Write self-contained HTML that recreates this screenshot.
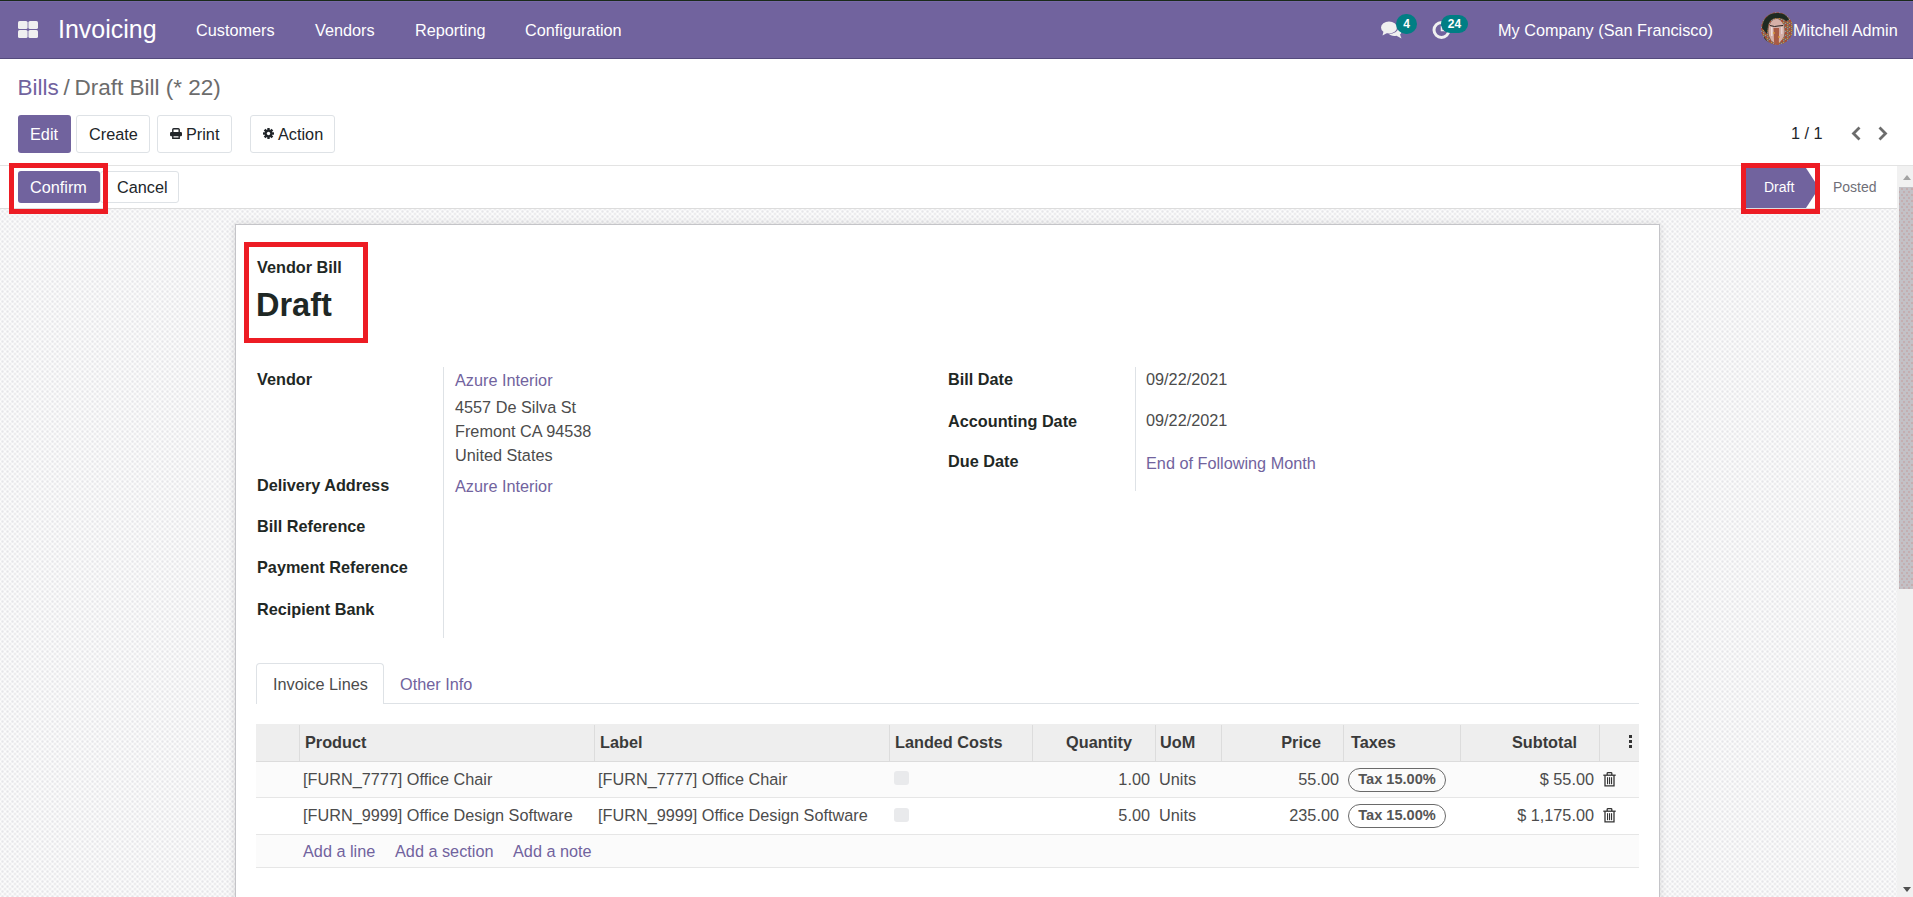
<!DOCTYPE html>
<html><head><meta charset="utf-8">
<style>
*{box-sizing:border-box;margin:0;padding:0}
html,body{width:1913px;height:897px;overflow:hidden;background:#fff}
body{font-family:"Liberation Sans",sans-serif;font-size:16.25px;color:#4c4c4c;position:relative}
.a{position:absolute;white-space:nowrap;line-height:1}
.nav{position:absolute;left:0;top:0;width:1913px;height:59px;background:#71639e;border-top:1px solid #1a2a1a;border-bottom:1px solid #544a7d;box-shadow:inset 0 1px 0 #7869a8}
.nav .a{color:#fff}
.btn{position:absolute;border:1px solid #dee2e6;border-radius:3px;background:#fff}
.btnp{position:absolute;border-radius:3px;background:#71639e}
.red{position:absolute;border:5px solid #ed1c24}
.lbl{font-weight:bold;color:#1f2825}
.lnk{color:#71639e}
.bg{position:absolute;left:0;top:209px;width:1897px;height:688px;
 background:radial-gradient(circle at 2.5px 2.5px,#e6e6e9 0,#e9e9ec 0.8px,rgba(255,255,255,0) 1.8px) 0 0/5px 5px,radial-gradient(circle at 2.5px 2.5px,#e6e6e9 0,#e9e9ec 0.8px,rgba(255,255,255,0) 1.8px) 2.5px 2.5px/5px 5px,#fcfcfc}
.sheet{position:absolute;left:235px;top:224px;width:1425px;height:700px;background:#fff;border:1px solid #c4c4c8;box-shadow:0 0 8px rgba(0,0,0,.12)}
.th{font-weight:bold;color:#3a3a3a}
.vsep{position:absolute;width:1px;background:#dee2e6}
</style></head><body>

<!-- NAVBAR -->
<div class="nav">
  <svg class="a" style="left:18px;top:20px" width="20" height="17" viewBox="0 0 20 17">
    <rect x="0" y="0" width="9.6" height="8.1" rx="1.6" fill="#f0f0f0"/>
    <rect x="10.4" y="0" width="9.6" height="8.1" rx="1.6" fill="#f0f0f0"/>
    <rect x="0" y="8.9" width="9.6" height="8.1" rx="1.6" fill="#f0f0f0"/>
    <rect x="10.4" y="8.9" width="9.6" height="8.1" rx="1.6" fill="#f0f0f0"/>
  </svg>
  <div class="a" style="left:58px;top:16px;font-size:25px">Invoicing</div>
  <div class="a" style="left:196px;top:21px">Customers</div>
  <div class="a" style="left:315px;top:21px">Vendors</div>
  <div class="a" style="left:415px;top:21px">Reporting</div>
  <div class="a" style="left:525px;top:21px">Configuration</div>

  <!-- chat icon -->
  <svg class="a" style="left:1381px;top:20px" width="22" height="19" viewBox="0 0 22 19">
    <ellipse cx="8" cy="6.5" rx="8" ry="6" fill="#f0f0f0"/>
    <path d="M2.5 10.5 L1.5 14.5 L7 11.5 Z" fill="#f0f0f0"/>
    <path d="M17.5 6.5 C21 8 21.5 11.5 19 13.5 L20.5 17.5 L15.5 14.8 C12 15.5 9 14.5 8 12.8 C13 12.8 17 10.5 17.5 6.5 Z" fill="#f0f0f0"/>
  </svg>
  <div class="a" style="left:1396px;top:13px;width:21px;height:20px;border-radius:10px;background:#017e84;color:#fff;font-size:12px;font-weight:bold;text-align:center;line-height:20px">4</div>
  <!-- clock icon -->
  <svg class="a" style="left:1432px;top:19px" width="20" height="20" viewBox="0 0 20 20">
    <circle cx="9.5" cy="10" r="7.5" fill="none" stroke="#f0f0f0" stroke-width="3"/>
    <path d="M9.5 6 V10.5 H13" fill="none" stroke="#f0f0f0" stroke-width="1.5"/>
  </svg>
  <div class="a" style="left:1441px;top:14px;width:27px;height:18px;border-radius:9px;background:#017e84;color:#fff;font-size:12px;font-weight:bold;text-align:center;line-height:18px">24</div>

  <div class="a" style="left:1498px;top:21px">My Company (San Francisco)</div>
  <svg class="a" style="left:1761px;top:11px" width="32" height="33" viewBox="0 0 32 33">
  <defs><clipPath id="av"><ellipse cx="16" cy="16.5" rx="16" ry="16.3"/></clipPath>
  <pattern id="spk" width="4" height="4" patternUnits="userSpaceOnUse"><rect width="4" height="4" fill="#8a6452"/><rect x="0" y="0" width="2" height="2" fill="#a84c34"/><rect x="2" y="2" width="1" height="1" fill="#d29434"/><rect x="2" y="0" width="1.2" height="1.2" fill="#8e8e8c"/><rect x="0" y="3" width="1" height="1" fill="#9a9894"/></pattern></defs>
  <g clip-path="url(#av)">
    <rect width="32" height="33" fill="url(#spk)"/>
    <path d="M1 16 C2 5 9 1 16 1 C22 1 26 3 28 8 L25 9 C23 7 20 6 16 6 C11 6 8 9 7 14 L6 22 Z" fill="#1e2a22"/>
    <path d="M3 24 C5 28 7 31 10 33 L4 33 Z" fill="#1e2a22"/>
    <ellipse cx="15.5" cy="19" rx="8" ry="12" fill="#d6b0a8"/>
    <path d="M9 13.5 L13.5 14.5 L17 14 L22 13.5" stroke="#2a2424" stroke-width="1" fill="none"/>
    <path d="M12.5 16 C13 22 12.5 27 13.5 33 L18 33 C17.5 27 18.5 21 18 16 Z" fill="#a85a44"/>
    <rect x="10" y="15" width="1.5" height="9" fill="#eadcdc"/>
    <rect x="20" y="15" width="1.5" height="7" fill="#e6d2d0"/>
    <circle cx="13" cy="21" r="0.9" fill="#d89a36"/><circle cx="18" cy="25" r="0.9" fill="#d89a36"/>
  </g>
</svg>
  <div class="a" style="left:1793px;top:21px">Mitchell Admin</div>
</div>

<!-- BACKGROUND + SHEET -->
<div class="bg"></div>
<div class="sheet"></div>

<!-- CONTROL PANEL -->
<div class="a" style="left:17.5px;top:77px;font-size:22.5px;color:#71639e">Bills</div>
<div class="a" style="left:63.5px;top:77px;font-size:22.5px;color:#6c6c6c">/</div>
<div class="a" style="left:74.5px;top:77px;font-size:22.5px;color:#6c6c6c">Draft Bill (* 22)</div>

<div class="btnp" style="left:18px;top:115px;width:53px;height:38px"></div>
<div class="a" style="left:30px;top:126px;color:#fff">Edit</div>
<div class="btn" style="left:76px;top:115px;width:74px;height:38px"></div>
<div class="a" style="left:89px;top:126px;color:#212529">Create</div>
<div class="btn" style="left:157px;top:115px;width:75px;height:38px"></div>
<svg class="a" style="left:170px;top:128px" width="12" height="11" viewBox="0 0 12 11">
  <path d="M2.8 4 V1.6 Q2.8 0.7 3.7 0.7 H8.3 Q9.2 0.7 9.2 1.6 V4" fill="none" stroke="#212529" stroke-width="1.4"/>
  <rect x="0" y="4" width="12" height="4.2" rx="1.2" fill="#212529"/>
  <path d="M2.8 7.5 V10.3 H9.2 V7.5" fill="none" stroke="#212529" stroke-width="1.4"/>
</svg>
<div class="a" style="left:186px;top:126px;color:#212529">Print</div>
<div class="btn" style="left:250px;top:115px;width:85px;height:38px"></div>
<svg class="a" style="left:263px;top:128px" width="11" height="11" viewBox="-6.5 -6.5 13 13">
  <g fill="#212529">
    <circle r="4.6"/>
    <rect x="-1.4" y="-6.5" width="2.8" height="13"/>
    <rect x="-1.4" y="-6.5" width="2.8" height="13" transform="rotate(45)"/>
    <rect x="-1.4" y="-6.5" width="2.8" height="13" transform="rotate(90)"/>
    <rect x="-1.4" y="-6.5" width="2.8" height="13" transform="rotate(135)"/>
  </g>
  <circle r="2" fill="#fff"/>
</svg>
<div class="a" style="left:278px;top:126px;color:#212529">Action</div>

<div class="a" style="left:1791px;top:125px;color:#212529">1 / 1</div>
<svg class="a" style="left:1850px;top:126px" width="12" height="15" viewBox="0 0 12 15">
  <path d="M9.5 1.5 L3.5 7.5 L9.5 13.5" fill="none" stroke="#6c6c6c" stroke-width="2.8"/>
</svg>
<svg class="a" style="left:1877px;top:126px" width="12" height="15" viewBox="0 0 12 15">
  <path d="M2.5 1.5 L8.5 7.5 L2.5 13.5" fill="none" stroke="#6c6c6c" stroke-width="2.8"/>
</svg>

<!-- STATUS BAR -->
<div class="a" style="left:0;top:165px;width:1913px;height:1px;background:#e3e3e3"></div>
<div class="a" style="left:0;top:208px;width:1897px;height:1px;background:#dcdcdc"></div>
<div class="btnp" style="left:18px;top:171px;width:82px;height:32px"></div>
<div class="a" style="left:30px;top:179px;color:#fff">Confirm</div>
<div class="btn" style="left:100px;top:171px;width:79px;height:32px"></div>
<div class="a" style="left:117px;top:179px;color:#212529">Cancel</div>
<div class="red" style="left:9px;top:163px;width:99px;height:51px"></div>

<svg class="a" style="left:1745px;top:168px" width="75" height="40" viewBox="0 0 75 40">
  <path d="M0 0 H61 L74 20 L61 40 H0 Z" fill="#71639e"/>
</svg>
<div class="a" style="left:1764px;top:180px;font-size:14px;color:#fff">Draft</div>
<div class="a" style="left:1833px;top:180px;font-size:14px;color:#6f6f78">Posted</div>
<div class="red" style="left:1741px;top:163px;width:79px;height:51px"></div>

<!-- SCROLLBAR -->
<div class="a" style="left:1897px;top:166px;width:16px;height:731px;background:#f1f1f1"></div>
<div class="a" style="left:1899px;top:187px;width:14px;height:402px;background:radial-gradient(circle at 1px 1px,#c49a9a 0 0.5px,rgba(0,0,0,0) 0.9px) 2px 1px/5px 6px,radial-gradient(circle at 1px 1px,#c49a9a 0 0.5px,rgba(0,0,0,0) 0.9px) 4px 4px/5px 6px,#c3c1c6"></div>
<svg class="a" style="left:1902px;top:173px" width="10" height="8" viewBox="0 0 10 8"><path d="M1 7 L5 2 L9 7 Z" fill="#a3a3a3"/></svg>
<svg class="a" style="left:1902px;top:886px" width="10" height="8" viewBox="0 0 10 8"><path d="M1 1 L5 6 L9 1 Z" fill="#505050"/></svg>


<div class="a lbl" style="left:257px;top:259px">Vendor Bill</div>
<div class="a lbl" style="left:256px;top:289px;font-size:32.5px">Draft</div>
<div class="red" style="left:244px;top:242px;width:124px;height:101px"></div>

<div class="vsep" style="left:443px;top:367px;height:271px"></div>
<div class="a lbl" style="left:257px;top:371px">Vendor</div>
<div class="a lbl" style="left:257px;top:477px">Delivery Address</div>
<div class="a lbl" style="left:257px;top:518px">Bill Reference</div>
<div class="a lbl" style="left:257px;top:559px">Payment Reference</div>
<div class="a lbl" style="left:257px;top:601px">Recipient Bank</div>

<div class="a lnk" style="left:455px;top:372px">Azure Interior</div>
<div class="a" style="left:455px;top:399px">4557 De Silva St</div>
<div class="a" style="left:455px;top:423px">Fremont CA 94538</div>
<div class="a" style="left:455px;top:447px">United States</div>
<div class="a lnk" style="left:455px;top:478px">Azure Interior</div>

<div class="vsep" style="left:1135px;top:367px;height:124px"></div>
<div class="a lbl" style="left:948px;top:371px">Bill Date</div>
<div class="a lbl" style="left:948px;top:413px">Accounting Date</div>
<div class="a lbl" style="left:948px;top:453px">Due Date</div>
<div class="a" style="left:1146px;top:371px">09/22/2021</div>
<div class="a" style="left:1146px;top:412px">09/22/2021</div>
<div class="a lnk" style="left:1146px;top:455px">End of Following Month</div>

<!-- TABS -->
<div class="a" style="left:256px;top:703px;width:1383px;height:1px;background:#dee2e6"></div>
<div class="a" style="left:256px;top:663px;width:128px;height:41px;background:#fff;border:1px solid #dee2e6;border-bottom:none;border-radius:4px 4px 0 0"></div>
<div class="a" style="left:273px;top:676px;color:#4c4c4c">Invoice Lines</div>
<div class="a lnk" style="left:400px;top:676px">Other Info</div>

<!-- TABLE -->
<div class="a" style="left:256px;top:724px;width:1383px;height:38px;background:#eeeeee;border-bottom:1px solid #dcdcdc"></div>
<div class="vsep" style="left:299px;top:725px;height:36px;background:#dcdcdc"></div>
<div class="vsep" style="left:594px;top:725px;height:36px;background:#dcdcdc"></div>
<div class="vsep" style="left:889px;top:725px;height:36px;background:#dcdcdc"></div>
<div class="vsep" style="left:1032px;top:725px;height:36px;background:#dcdcdc"></div>
<div class="vsep" style="left:1155px;top:725px;height:36px;background:#dcdcdc"></div>
<div class="vsep" style="left:1221px;top:725px;height:36px;background:#dcdcdc"></div>
<div class="vsep" style="left:1343px;top:725px;height:36px;background:#dcdcdc"></div>
<div class="vsep" style="left:1460px;top:725px;height:36px;background:#dcdcdc"></div>
<div class="vsep" style="left:1599px;top:725px;height:36px;background:#dcdcdc"></div>
<div class="a th" style="left:305px;top:734px">Product</div>
<div class="a th" style="left:600px;top:734px">Label</div>
<div class="a th" style="left:895px;top:734px">Landed Costs</div>
<div class="a th" style="left:1032px;top:734px;width:100px;text-align:right">Quantity</div>
<div class="a th" style="left:1160px;top:734px">UoM</div>
<div class="a th" style="left:1221px;top:734px;width:100px;text-align:right">Price</div>
<div class="a th" style="left:1351px;top:734px">Taxes</div>
<div class="a th" style="left:1460px;top:734px;width:117px;text-align:right">Subtotal</div>
<svg class="a" style="left:1628px;top:734px" width="5" height="15" viewBox="0 0 5 15"><g fill="#333"><rect x="1" y="1" width="3" height="3"/><rect x="1" y="6" width="3" height="3"/><rect x="1" y="11" width="3" height="3"/></g></svg>

<div class="a" style="left:256px;top:762px;width:1383px;height:35px;background:#fbfbfb"></div>
<div class="a" style="left:256px;top:797px;width:1383px;height:1px;background:#e6e6e6"></div>
<div class="a" style="left:256px;top:834px;width:1383px;height:1px;background:#e6e6e6"></div>
<div class="a" style="left:256px;top:835px;width:1383px;height:33px;background:#fbfbfb"></div>
<div class="a" style="left:256px;top:867px;width:1383px;height:1px;background:#e6e6e6"></div>

<div class="a" style="left:303px;top:771px">[FURN_7777] Office Chair</div>
<div class="a" style="left:598px;top:771px">[FURN_7777] Office Chair</div>
<div class="a" style="left:894px;top:771px;width:15px;height:14px;border-radius:3px;background:#e9eaec"></div>
<div class="a" style="left:1050px;top:771px;width:100px;text-align:right">1.00</div>
<div class="a" style="left:1159px;top:771px">Units</div>
<div class="a" style="left:1239px;top:771px;width:100px;text-align:right">55.00</div>
<div class="a" style="left:1348px;top:768px;width:98px;height:24px;border:1.3px solid #6a6a6a;border-radius:12px;font-size:14.6px;font-weight:bold;color:#555;text-align:center;line-height:21.5px">Tax 15.00%</div>
<div class="a" style="left:1444px;top:771px;width:150px;text-align:right">$ 55.00</div>

<div class="a" style="left:303px;top:807px">[FURN_9999] Office Design Software</div>
<div class="a" style="left:598px;top:807px">[FURN_9999] Office Design Software</div>
<div class="a" style="left:894px;top:808px;width:15px;height:14px;border-radius:3px;background:#e9eaec"></div>
<div class="a" style="left:1050px;top:807px;width:100px;text-align:right">5.00</div>
<div class="a" style="left:1159px;top:807px">Units</div>
<div class="a" style="left:1239px;top:807px;width:100px;text-align:right">235.00</div>
<div class="a" style="left:1348px;top:804px;width:98px;height:24px;border:1.3px solid #6a6a6a;border-radius:12px;font-size:14.6px;font-weight:bold;color:#555;text-align:center;line-height:21.5px">Tax 15.00%</div>
<div class="a" style="left:1444px;top:807px;width:150px;text-align:right">$ 1,175.00</div>

<svg class="a" style="left:1603px;top:772px" width="13" height="15" viewBox="0 0 13 15"><g fill="none" stroke="#333" stroke-width="1.3"><path d="M0.3 3.2 H12.7"/><path d="M4.2 3 V1.3 Q4.2 0.7 5 0.7 H8 Q8.8 0.7 8.8 1.3 V3"/><path d="M2 3.2 V13.8 H11 V3.2"/></g><g fill="#333"><rect x="4" y="5.2" width="1.1" height="7"/><rect x="6" y="5.2" width="1.1" height="7"/><rect x="8" y="5.2" width="1.1" height="7"/></g></svg>
<svg class="a" style="left:1603px;top:808px" width="13" height="15" viewBox="0 0 13 15"><g fill="none" stroke="#333" stroke-width="1.3"><path d="M0.3 3.2 H12.7"/><path d="M4.2 3 V1.3 Q4.2 0.7 5 0.7 H8 Q8.8 0.7 8.8 1.3 V3"/><path d="M2 3.2 V13.8 H11 V3.2"/></g><g fill="#333"><rect x="4" y="5.2" width="1.1" height="7"/><rect x="6" y="5.2" width="1.1" height="7"/><rect x="8" y="5.2" width="1.1" height="7"/></g></svg>

<div class="a lnk" style="left:303px;top:843px">Add a line</div>
<div class="a lnk" style="left:395px;top:843px">Add a section</div>
<div class="a lnk" style="left:513px;top:843px">Add a note</div>

</body></html>
